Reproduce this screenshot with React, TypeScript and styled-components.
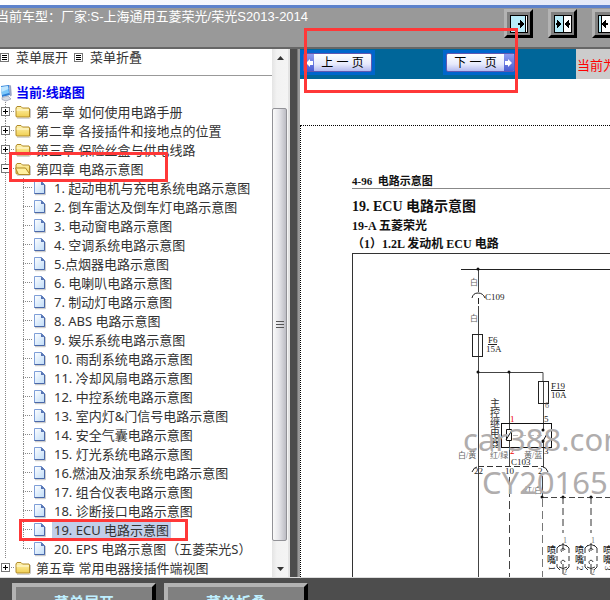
import React, { useState } from "react";
import styled, { createGlobalStyle } from "styled-components";

const GlobalStyle = createGlobalStyle`
  * { box-sizing: border-box; }
  html, body { margin: 0; padding: 0; }
  body { background: #fff; overflow: hidden; }
  button { font: inherit; padding: 0; margin: 0; cursor: pointer; }
  ul { list-style: none; margin: 0; padding: 0; }
`;

const uiFont = `"Noto Sans", "Noto Sans CJK SC", sans-serif`;
const plainFont = `"Liberation Sans", "Noto Sans CJK SC", sans-serif`;
const printFont = `"Liberation Serif", "Noto Sans CJK SC", serif`;

const Page = styled.div`
  display: flex;
  flex-direction: column;
  height: 100vh;
  overflow: hidden;
  background: #4d4d4d;
`;

const WindowEdge = styled.div`
  height: 8px;
  flex: none;
  background: linear-gradient(90deg, #fdfdff, #e4e9f8);
  border-bottom: 3px solid #5d82cc;
`;

const Header = styled.header`
  display: flex;
  justify-content: space-between;
  height: 41px;
  flex: none;
  background: #999;
  border-bottom: 2px solid #666;
  overflow: hidden;
`;

const VehicleTitle = styled.h1`
  margin: 0 0 0 -4px;
  font: 400 13px/18px ${plainFont};
  color: #fff;
  white-space: nowrap;
`;

const LayoutTools = styled.div`
  display: flex;
  gap: 15px;
  width: 106px;
  flex: none;
  padding-top: 1px;
`;

const ToolButton = styled.button`
  display: grid;
  place-items: center;
  width: 29px;
  height: 29px;
  flex: none;
  background: #808080;
  border: 3px solid;
  border-color: #b3b3b3 #000 #000 #b3b3b3;
`;

const Body = styled.main`
  display: grid;
  grid-template-columns: 290px 8px 1fr;
  flex: 1;
  min-height: 0;
`;

const Sidebar = styled.aside`
  display: flex;
  min-width: 0;
  min-height: 0;
  background: #fff;
  border-right: 2px solid #e3e3e3;
  font: 400 13px/19px ${uiFont};
  color: #333;
`;

const SidebarContent = styled.div`
  flex: 1;
  min-width: 0;
  overflow: hidden;
`;

const MenuBar = styled.div`
  display: flex;
  gap: 6px;
  height: 27px;
  border-bottom: 1px solid #999;
  margin-bottom: 7px;
`;

const MenuButton = styled.button`
  display: flex;
  align-items: center;
  gap: 7px;
  height: 16px;
  background: none;
  border: 0;
  color: #333;
`;

const RootRow = styled.div`
  display: flex;
  align-items: center;
  gap: 4px;
  height: 19px;
  font-weight: 700;
  color: #0000f0;
`;

const Row = styled.div`
  position: relative;
  display: flex;
  align-items: center;
  height: 19px;
`;

const Branch = styled.li<{ $last?: boolean }>`
  background: ${(p) =>
    p.$last
      ? "none"
      : "repeating-linear-gradient(#888 0 1px, transparent 1px 2px) 5px 0 / 1px 100% no-repeat"};
`;

const Toggle = styled.button`
  display: flex;
  align-items: center;
  width: 15px;
  height: 19px;
  background: none;
  border: 0;
`;

const TreeLink = styled.a<{ $selected?: boolean }>`
  padding: 0 2px;
  margin-left: 3px;
  line-height: 16px;
  color: #333;
  text-decoration: none;
  white-space: nowrap;
  background: ${(p) => (p.$selected ? "#c1cfea" : "transparent")};
`;

const Leaf = styled.li<{ $last?: boolean }>`
  padding-left: 23px;
  background: repeating-linear-gradient(#888 0 1px, transparent 1px 2px) 23px 0 / 1px
    ${(p) => (p.$last ? "10px" : "100%")} no-repeat;
`;

const Connector = styled.span`
  width: 10px;
  height: 1px;
  background: repeating-linear-gradient(90deg, #888 0 1px, transparent 1px 2px);
`;

const LeafLink = styled(TreeLink)`
  margin-left: 6px;
`;

const Marker = styled.span<{ $left: number; $top: number; $width: number; $height: number }>`
  position: absolute;
  z-index: 2;
  left: ${(p) => p.$left}px;
  top: ${(p) => p.$top}px;
  width: ${(p) => p.$width}px;
  height: ${(p) => p.$height}px;
  border: 3px solid #ff3838;
  pointer-events: none;
`;

const ScrollTrack = styled.div`
  display: flex;
  flex-direction: column;
  width: 16px;
  flex: none;
  background: linear-gradient(90deg, #e4e4e4, #f2f2f2 30%, #f4f4f4);
`;

const ScrollArrow = styled.button`
  display: grid;
  place-items: center;
  height: 17px;
  border: 0;
  background: none;
`;

const ScrollThumb = styled.div`
  display: grid;
  place-items: center;
  flex: 1;
  margin: 42px 1px 19px 0;
  border: 1px solid #929297;
  border-radius: 2px;
  background: linear-gradient(90deg, #fafafa, #e6e6ea 45%, #bcbcc3);
`;

const Splitter = styled.div`
  background: #4d4d4d;
  border-right: 1px solid #777;
`;

const Viewer = styled.section`
  position: relative;
  display: flex;
  flex-direction: column;
  min-width: 0;
  min-height: 0;
  background: #fff;
  border-left: 2px solid #999;
`;

const PagerBar = styled.nav`
  display: flex;
  height: 30px;
  flex: none;
  background: #069;
`;

const PagerButtons = styled.div`
  display: flex;
  gap: 68px;
  width: 276px;
  flex: none;
  padding-top: 1px;
`;

const PagerButton = styled.button`
  display: flex;
  width: 75px;
  height: 25px;
  border: 3px solid #0066cc;
  background: #0066cc;
`;

const PagerFace = styled.span`
  display: flex;
  flex: 1;
  height: 19px;
  overflow: hidden;
  border: 1px solid #6058b0;
  border-radius: 2px;
  background: linear-gradient(#fff, #e6e9fc 60%, #b4baf0);
`;

const PagerArrow = styled.span`
  display: grid;
  place-items: center;
  width: 10px;
  background: linear-gradient(#8f9cf0, #4a5cd2);
`;

const PagerText = styled.span`
  flex: 1;
  font: 400 12px/18px ${plainFont};
  color: #000;
  white-space: nowrap;
`;

const Notice = styled.div`
  flex: 1;
  overflow: hidden;
  padding-left: 1px;
  background: #ccc;
  font: 400 13px/34px ${plainFont};
  color: #f00;
  white-space: nowrap;
`;

const Sheet = styled.article`
  display: flex;
  flex-direction: column;
  flex: 1;
  min-height: 0;
  margin-top: 46px;
  padding: 49px 0 0 51px;
  border: 1px dotted #000;
  border-width: 1px 0 0 1px;
  font-family: ${printFont};
  font-weight: 700;
  color: #111;
  overflow: hidden;
  white-space: nowrap;
`;

const RunningHead = styled.div`
  border-bottom: 1px solid #888;
  font-size: 11px;
  line-height: 13px;
`;

const SheetTitle = styled.h2`
  margin: 8px 0 0;
  font-size: 14px;
  line-height: 20px;
`;

const SheetSubtitle = styled.h3`
  margin: 0;
  font-size: 12px;
  line-height: 18px;
`;

const Figure = styled.div`
  flex: 1;
  min-height: 0;
  overflow: hidden;
  border: 1px solid #333;
  border-width: 1px 0 0 1px;
`;

const Diagram = styled.svg`
  display: block;
  width: 100%;
  height: 100%;
  font-family: ${printFont};
  font-weight: 400;
`;

const Footer = styled.footer`
  display: flex;
  gap: 8px;
  height: 23px;
  flex: none;
  padding: 5px 0 0 12px;
  border-top: 1px solid #ddd;
  background: #4d4d4d;
  overflow: hidden;
`;

const FooterButton = styled.button`
  width: 144px;
  height: 40px;
  flex: none;
  border: 4px solid;
  border-color: #b3b3b3 #000 #000 #b3b3b3;
  background: #808080;
  && { font: 700 15px/30px ${plainFont}; }
  color: #bfefff;
`;

const chapters = [
  "第一章 如何使用电路手册",
  "第二章 各接插件和接地点的位置",
  "第三章 保险丝盒与供电线路",
  "第四章 电路示意图",
  "第五章 常用电器接插件端视图",
];

const circuits = [
  "1. 起动电机与充电系统电路示意图",
  "2. 倒车雷达及倒车灯电路示意图",
  "3. 电动窗电路示意图",
  "4. 空调系统电路示意图",
  "5.点烟器电路示意图",
  "6. 电喇叭电路示意图",
  "7. 制动灯电路示意图",
  "8. ABS 电路示意图",
  "9. 娱乐系统电路示意图",
  "10. 雨刮系统电路示意图",
  "11. 冷却风扇电路示意图",
  "12. 中控系统电路示意图",
  "13. 室内灯&门信号电路示意图",
  "14. 安全气囊电路示意图",
  "15. 灯光系统电路示意图",
  "16.燃油及油泵系统电路示意图",
  "17. 组合仪表电路示意图",
  "18. 诊断接口电路示意图",
  "19. ECU 电路示意图",
  "20. EPS 电路示意图（五菱荣光S）",
];

const MenuIcon = () => (
  <svg width="9" height="9" shapeRendering="crispEdges">
    <rect x="0.5" y="0.5" width="8" height="8" fill="#fff" stroke="#777" />
    <path d="M2 2.5h5M2 4.5h5M2 6.5h5" stroke="#000" />
  </svg>
);

const ComputerIcon = () => (
  <svg width="12" height="18" viewBox="0 0 12 18">
    <path d="M1 2l8-1 1 10-8 2z" fill="#2f7fd6" />
    <path d="M1 3l7-1 1 7-7 2z" fill="#7cc8fa" />
    <path d="M1 3l7-1 .4 3L1.500 8z" fill="#bfe6ff" />
    <path d="M9 1l2 .5.8 10-1.800 1z" fill="#9aa5c4" />
    <path d="M2 13.500l6-1.500 3 3-5 2-4-1.500z" fill="#d5d9e2" stroke="#8990a8" strokeWidth="0.600" />
  </svg>
);

const ToggleIcon = ({ open }: { open: boolean }) => (
  <svg width="15" height="9" shapeRendering="crispEdges">
    <rect x="1.5" y="0.5" width="8" height="8" fill="#fff" stroke="#777" />
    <path d={open ? "M3 4.5h5" : "M3 4.5h5M5.5 2v5"} stroke="#000" />
    <path d="M11 4.5h4" stroke="#888" strokeDasharray="1 1" />
  </svg>
);

const FolderIcon = ({ open }: { open: boolean }) => (
  <svg width="16" height="14" viewBox="0 0 16 14">
    <defs>
      <linearGradient id="folder" x1="0" y1="0" x2="0" y2="1">
        <stop offset="0" stopColor="#fff3b0" />
        <stop offset="1" stopColor="#f0cf52" />
      </linearGradient>
    </defs>
    <path d="M2 13.3h12.5l1-1V4" fill="none" stroke="#777" strokeWidth="0.8" opacity="0.5" />
    <path d="M1 11.5V3l1-1.500h4l1.500 1.500H14l.5 1v8H2z" fill="url(#folder)" stroke="#b08a28" />
    {open ? (
      <path d="M3.500 12.500L.5 6h10l4.500 6.500z" fill="#fff0a0" stroke="#b08a28" />
    ) : (
      <path d="M1.500 5h12.500" stroke="#fffbe0" />
    )}
  </svg>
);

const PageIcon = () => (
  <svg width="13" height="16" viewBox="0 0 13 16">
    <defs>
      <linearGradient id="paper" x1="0" y1="0" x2="1" y2="1">
        <stop offset="0" stopColor="#fff" />
        <stop offset="1" stopColor="#bfdcf8" />
      </linearGradient>
    </defs>
    <path d="M2 14.700h10.300V5" fill="none" stroke="#999" opacity="0.600" />
    <path d="M1.500 1.500h7l3 3v9h-10z" fill="url(#paper)" stroke="#7f9fd8" />
    <path d="M8 1.500l3.500 3.500v8.500H1.500" fill="none" stroke="#4a68a8" />
    <path d="M8 1.500v3.500h3.500z" fill="#5573b4" />
  </svg>
);

const SplitIcon = ({ kind }: { kind: "right" | "both" | "left" }) => (
  <svg width="18" height="18" viewBox="0 0 18 18" shapeRendering="crispEdges">
    <rect width="18" height="18" fill="#fff" />
    {kind === "right" && <path d="M0 0h15v18H0z" fill="#b8ecfa" />}
    {kind === "both" && <path d="M0 0h9v18H0z" fill="#b8ecfa" />}
    {kind === "left" && <path d="M0 0h3v18H0z" fill="#b8ecfa" />}
    <rect x="0.5" y="0.5" width="17" height="17" fill="none" stroke="#000" />
    {kind === "right" && (
      <>
        <path d="M15.500 0v18" stroke="#000" />
        <path d="M8 8h2V5h1v1h1v1h1v1h1v2h-1v1h-1v1h-1v1h-1v-3H8z" />
      </>
    )}
    {kind === "both" && (
      <>
        <path d="M9.500 0v18" stroke="#000" />
        <path d="M2 8h1V5h1v1h1v1h1v1h1v2H6v1H5v1H4v1H3v-3H2z" />
        <path d="M16 8h-1V5h-1v1h-1v1h-1v1h-1v2h1v1h1v1h1v1h1v-3h1z" />
      </>
    )}
    {kind === "left" && (
      <>
        <path d="M3.500 0v18" stroke="#000" />
        <path d="M10 8H8V5H7v1H6v1H5v1H4v2h1v1h1v1h1v1h1v-3h2z" />
      </>
    )}
  </svg>
);

const PagerGlyph = ({ back }: { back?: boolean }) => (
  <svg width="8" height="18" viewBox="0 0 8 18">
    <path d={back ? "M8 7H5V5L1 9l4 4v-2h3z" : "M0 7h3V5l4 4-4 4v-2H0z"} fill="#fff" />
  </svg>
);

const Injector = ({ x, n }: { x: number; n: number }) => (
  <g stroke="#333" fill="none">
    <path d={`M${x} 497v36`} strokeDasharray="7 4" />
    <path d={`M${x} 543v8M${x - 4} 546q4-3 8 0M${x + 2} 550a2 2 0 1 0-3 2M${x - 1} 564a2 2 0 1 1 3-2M${x - 4} 567q4 3 8 0M${x} 564v10`} />
    <path d={`M${x - 6} 548v19M${x + 6} 548v19M${x - 6} 548l3-3M${x + 6} 548l-3-3M${x - 6} 567l3 3M${x + 6} 567l-3 3`} strokeDasharray="5 3" />
    <g stroke="none" fill="#222" fontSize="9">
      <text x={x - 16} y="553" fontWeight="500">喷</text>
      <text x={x - 16} y="563" fontWeight="500">嘴</text>
      <text transform={`translate(${x - 14} 566) rotate(90)`}>{n}</text>
      <text x={x} y="543" fill="#777" fontSize="8">1</text>
      <text x={x} y="575" fill="#777" fontSize="8">2</text>
    </g>
  </g>
);

const Circuit = () => (
  <Diagram role="img" aria-label="ECU 电路">
    <g transform="translate(-353 -254)">
      <path d="M461 269.500H1200" stroke="#222" />
      <g stroke="#444" fill="none">
        <path d="M478.500 269v23M478.500 306v271" />
        <path d="M478.500 298v6M472 298q1-5 6-5t7 5" stroke="#222" />
        <rect x="472.500" y="334.500" width="10" height="22" stroke="#222" />
        <path d="M478 372.500h65v9M509.500 372v57M509.500 440v26M543.500 381v49M543.500 440v26" />
        <rect x="538.500" y="381.500" width="10" height="22" stroke="#222" />
        <rect x="501.500" y="423.500" width="50" height="24" stroke="#111" />
        <path d="M506.500 429.500h5v11h-5zM506 440l6-10M549 430l-7 13" stroke="#111" />
        <path d="M513 435.500h30" stroke="#bbb" strokeDasharray="5 3" />
        <path d="M488 344.500h9M551 390.500h14" stroke="#222" />
        <path d="M478 466.500h66" stroke="#333" strokeDasharray="6 3" />
        <path d="M472 472q2-5 5-5M548 472q-2-5-5-5" stroke="#222" />
        <path d="M509.500 477v100" strokeDasharray="8 4" />
        <path d="M542.500 476v21" />
        <path d="M542.500 499v78" stroke="#777" strokeDasharray="8 4" />
        <path d="M542 497.500h600" strokeDasharray="6 3" />
      </g>
      {[[478, 269], [478, 372], [509, 372], [542, 497], [563, 497], [591, 497], [543, 430], [543, 441]].map(([cx, cy]) => (
        <circle key={`${cx}-${cy}`} cx={cx} cy={cy} r="1.500" fill="#111" />
      ))}
      <g fontSize="9" fill="#222">
        <text x="485" y="300">C109</text>
        <text x="488" y="343">F6</text>
        <text x="486" y="352">15A</text>
        <text x="551" y="389">F19</text>
        <text x="551" y="398">10A</text>
        <text x="511" y="465">C103</text>
        <text x="474" y="474">22</text>
        <text x="505" y="474">10</text>
        <text x="538" y="474">2</text>
        <text x="544" y="422">5</text>
        <text x="544" y="454">3</text>
        <text x="510" y="422" fill="#e00">1</text>
        <text x="510" y="454" fill="#e00">2</text>
      </g>
      <g fontSize="8" fill="#666">
        <text x="470" y="285">白</text>
        <text x="470" y="321">白</text>
        <text x="545" y="408">6</text>
        <text x="458" y="458">白/黄</text>
        <text x="490" y="458">红/绿</text>
        <text x="524" y="458">黄/蓝</text>
        <text x="524" y="493">红/白</text>
      </g>
      <g fontSize="10" fill="#333">
        {["主", "控", "继", "电", "器"].map((c, i) => (
          <text key={c} x="490" y={407 + i * 10}>{c}</text>
        ))}
      </g>
      <Injector x={563} n={1} />
      <Injector x={591} n={2} />
      <Injector x={619} n={3} />
      <g fontFamily='"Noto Sans", sans-serif' fontSize="31" fill="#b0adad">
        <text x="463" y="451">car388.com</text>
        <text x="482" y="494">CY20165</text>
      </g>
    </g>
  </Diagram>
);

export default function App() {
  const [opened, setOpened] = useState(3);
  const [selected, setSelected] = useState(18);

  return (
    <>
      <GlobalStyle />
      <Page>
        <WindowEdge />
        <Header>
          <VehicleTitle>当前车型：厂家:S-上海通用五菱荣光/荣光S2013-2014</VehicleTitle>
          <LayoutTools>
            <ToolButton aria-label="展开左栏"><SplitIcon kind="right" /></ToolButton>
            <ToolButton aria-label="左右均分"><SplitIcon kind="both" /></ToolButton>
            <ToolButton aria-label="收起左栏"><SplitIcon kind="left" /></ToolButton>
          </LayoutTools>
        </Header>
        <Body>
          <Sidebar>
            <SidebarContent>
              <MenuBar>
                <MenuButton onClick={() => setOpened(3)}><MenuIcon />菜单展开</MenuButton>
                <MenuButton onClick={() => setOpened(-1)}><MenuIcon />菜单折叠</MenuButton>
              </MenuBar>
              <RootRow><ComputerIcon /><span>当前:线路图</span></RootRow>
              <ul>
                {chapters.map((title, i) => (
                  <Branch key={title} $last={i === chapters.length - 1}>
                    <Row>
                      <Toggle aria-label={title} onClick={() => setOpened(opened === i ? -1 : i)}>
                        <ToggleIcon open={opened === i} />
                      </Toggle>
                      <FolderIcon open={opened === i} />
                      <TreeLink href="#">{title}</TreeLink>
                      {i === 3 && <Marker $left={9} $top={-7} $width={159} $height={30} />}
                    </Row>
                    {i === 3 && opened === 3 && (
                      <ul>
                        {circuits.map((name, n) => (
                          <Leaf key={name} $last={n === circuits.length - 1}>
                            <Row>
                              <Connector />
                              <PageIcon />
                              <LeafLink href="#" $selected={selected === n} onClick={() => setSelected(n)}>
                                {name}
                              </LeafLink>
                              {n === 18 && <Marker $left={-4} $top={-1} $width={169} $height={22} />}
                            </Row>
                          </Leaf>
                        ))}
                      </ul>
                    )}
                  </Branch>
                ))}
              </ul>
            </SidebarContent>
            <ScrollTrack>
              <ScrollArrow aria-label="向上滚动">
                <svg width="7" height="4"><path d="M0 4l3.500-4L7 4z" fill="#333" /></svg>
              </ScrollArrow>
              <ScrollThumb>
                <svg width="8" height="8" shapeRendering="crispEdges">
                  <path d="M0 .5h8M0 3.500h8M0 6.500h8" stroke="#555" />
                </svg>
              </ScrollThumb>
              <ScrollArrow aria-label="向下滚动">
                <svg width="7" height="4"><path d="M0 0l3.500 4L7 0z" fill="#333" /></svg>
              </ScrollArrow>
            </ScrollTrack>
          </Sidebar>
          <Splitter />
          <Viewer>
            <PagerBar>
              <PagerButtons>
                <PagerButton>
                  <PagerFace><PagerArrow><PagerGlyph back /></PagerArrow><PagerText>上 一 页</PagerText></PagerFace>
                </PagerButton>
                <PagerButton>
                  <PagerFace><PagerText>下 一 页</PagerText><PagerArrow><PagerGlyph /></PagerArrow></PagerFace>
                </PagerButton>
              </PagerButtons>
              <Notice>当前为</Notice>
            </PagerBar>
            <Marker $left={4} $top={-21} $width={214} $height={65} />
            <Sheet>
              <RunningHead>4-96&nbsp; 电路示意图</RunningHead>
              <SheetTitle>19. ECU 电路示意图</SheetTitle>
              <SheetSubtitle>19-A 五菱荣光</SheetSubtitle>
              <SheetSubtitle>（1）1.2L 发动机 ECU 电路</SheetSubtitle>
              <Figure><Circuit /></Figure>
            </Sheet>
          </Viewer>
        </Body>
        <Footer>
          <FooterButton onClick={() => setOpened(3)}>菜单展开</FooterButton>
          <FooterButton onClick={() => setOpened(-1)}>菜单折叠</FooterButton>
        </Footer>
      </Page>
    </>
  );
}
